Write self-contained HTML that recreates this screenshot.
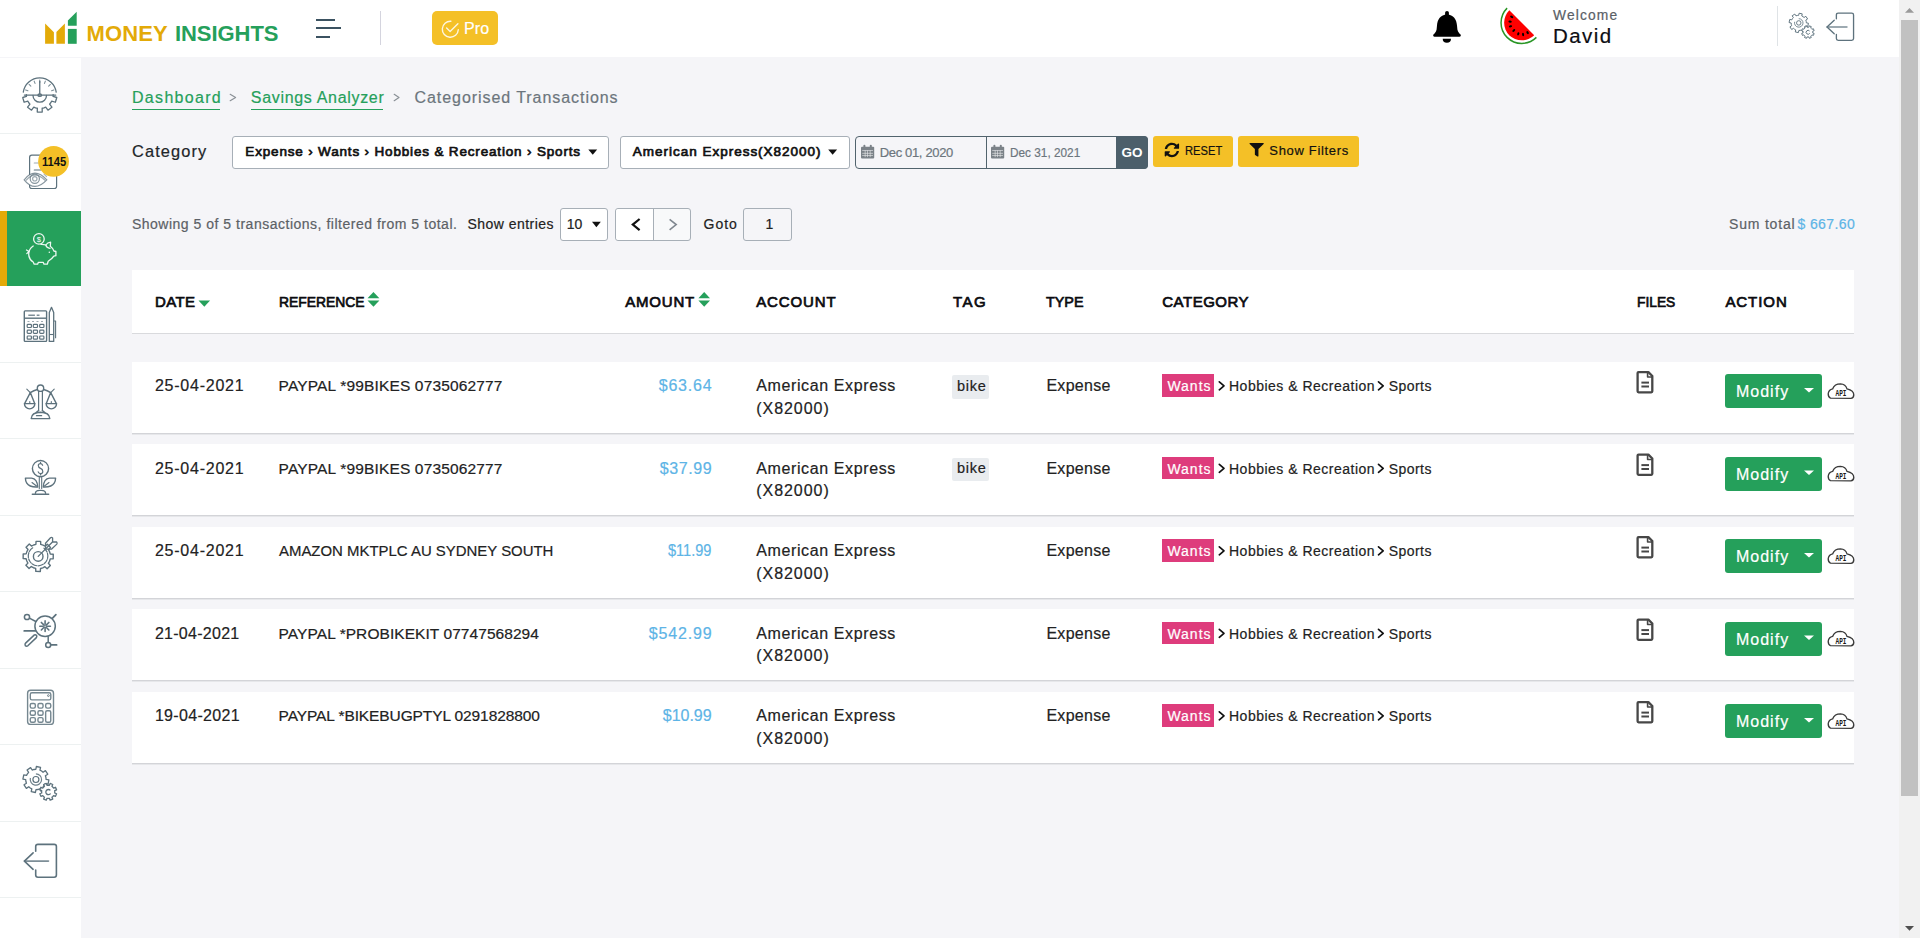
<!DOCTYPE html>
<html><head><meta charset="utf-8"><title>Money Insights - Categorised Transactions</title>
<style>
html,body{margin:0;padding:0;}
body{width:1920px;height:938px;overflow:hidden;background:#f5f5f8;font-family:"Liberation Sans",sans-serif;position:relative;}
.a{position:absolute;box-sizing:border-box;}
.t{position:absolute;white-space:nowrap;line-height:1.1172;font-family:"Liberation Sans",sans-serif;}
.r{-webkit-text-stroke:0.2px currentColor;}
.sb{-webkit-text-stroke:0.7px currentColor;}
#ov{position:absolute;left:0;top:0;width:1920px;height:938px;}
</style></head><body>
<div class="a" style="left:0.00px;top:0.00px;width:1899.00px;height:57.00px;background:#fff;"></div>
<div class="a" style="left:0.00px;top:58.00px;width:81.00px;height:880.00px;background:#fff;"></div>
<div class="a" style="left:0.00px;top:132.50px;width:81.00px;height:1.00px;background:#edf1f1;"></div>
<div class="a" style="left:0.00px;top:361.91px;width:81.00px;height:1.00px;background:#edf1f1;"></div>
<div class="a" style="left:0.00px;top:438.38px;width:81.00px;height:1.00px;background:#edf1f1;"></div>
<div class="a" style="left:0.00px;top:514.85px;width:81.00px;height:1.00px;background:#edf1f1;"></div>
<div class="a" style="left:0.00px;top:591.32px;width:81.00px;height:1.00px;background:#edf1f1;"></div>
<div class="a" style="left:0.00px;top:667.79px;width:81.00px;height:1.00px;background:#edf1f1;"></div>
<div class="a" style="left:0.00px;top:744.26px;width:81.00px;height:1.00px;background:#edf1f1;"></div>
<div class="a" style="left:0.00px;top:820.73px;width:81.00px;height:1.00px;background:#edf1f1;"></div>
<div class="a" style="left:0.00px;top:897.20px;width:81.00px;height:1.00px;background:#edf1f1;"></div>
<div class="a" style="left:0.00px;top:210.50px;width:81.00px;height:75.50px;background:#25a05b;"></div>
<div class="a" style="left:0.00px;top:210.50px;width:7.00px;height:75.50px;background:#e3aa08;"></div>
<div class="a" style="left:380.00px;top:11.00px;width:1.00px;height:34.00px;background:#d4d4de;"></div>
<div class="a" style="left:1777.00px;top:6.00px;width:1.00px;height:40.00px;background:#dfe3e6;"></div>
<div class="a" style="left:132.00px;top:108.60px;width:88.00px;height:1.40px;background:#25a05b;"></div>
<div class="a" style="left:250.80px;top:108.60px;width:131.80px;height:1.40px;background:#25a05b;"></div>
<div class="a" style="left:432.00px;top:11.00px;width:66.00px;height:34.00px;background:#f4c027;border-radius:5px;"></div>
<div class="a" style="left:1899.00px;top:0.00px;width:21.00px;height:938.00px;background:#f1f1f1;"></div>
<div class="a" style="left:1901.00px;top:20.00px;width:17.00px;height:776.00px;background:#c1c1c1;"></div>
<div class="a" style="left:232.00px;top:136.00px;width:377.00px;height:33.00px;background:#fff;border:1px solid #a7afb7;border-radius:3px;"></div>
<div class="a" style="left:620.00px;top:136.00px;width:230.00px;height:33.00px;background:#fff;border:1px solid #a7afb7;border-radius:3px;"></div>
<div class="a" style="left:855.00px;top:136.00px;width:293.00px;height:33.00px;background:#f5f5f8;border:1px solid #51636d;border-radius:4px;"></div>
<div class="a" style="left:986.00px;top:136.00px;width:1.00px;height:33.00px;background:#51636d;"></div>
<div class="a" style="left:1116.00px;top:136.00px;width:32.00px;height:33.00px;background:#4c5f6b;border-radius:0 4px 4px 0;"></div>
<div class="a" style="left:1153.00px;top:136.00px;width:80.00px;height:31.00px;background:#f4c027;border-radius:3px;"></div>
<div class="a" style="left:1238.00px;top:136.00px;width:121.00px;height:31.00px;background:#f4c027;border-radius:3px;"></div>
<div class="a" style="left:560.00px;top:208.00px;width:48.00px;height:33.00px;background:#fff;border:1px solid #a7afb7;border-radius:3px;"></div>
<div class="a" style="left:615.00px;top:208.00px;width:76.00px;height:33.00px;background:#f8f9fa;border:1px solid #a7afb7;border-radius:3px;"></div>
<div class="a" style="left:616.00px;top:209.00px;width:37.00px;height:31.00px;background:#fff;border-radius:3px 0 0 3px;"></div>
<div class="a" style="left:653.00px;top:208.00px;width:1.00px;height:33.00px;background:#a7afb7;"></div>
<div class="a" style="left:743.00px;top:208.00px;width:49.00px;height:33.00px;background:#f5f5f8;border:1px solid #a7afb7;border-radius:3px;"></div>
<div class="a" style="left:132.00px;top:270.00px;width:1722.00px;height:64.00px;background:#fff;border-bottom:1px solid #d9dadd;"></div>
<div class="a" style="left:132.00px;top:362.00px;width:1722.00px;height:72.00px;background:#fff;border-bottom:1px solid #d3d4d8;box-shadow:0 1px 0 #e6e7ea;"></div>
<div class="a" style="left:951.80px;top:375.30px;width:36.95px;height:23.45px;background:#e9ecef;border-radius:2px;"></div>
<div class="a" style="left:1161.90px;top:374.20px;width:51.90px;height:22.50px;background:#de3c7c;"></div>
<div class="a" style="left:1725.00px;top:374.00px;width:97.00px;height:34.00px;background:#25a05b;border-radius:3px;"></div>
<div class="a" style="left:132.00px;top:444.00px;width:1722.00px;height:72.00px;background:#fff;border-bottom:1px solid #d3d4d8;box-shadow:0 1px 0 #e6e7ea;"></div>
<div class="a" style="left:951.80px;top:457.80px;width:36.95px;height:23.45px;background:#e9ecef;border-radius:2px;"></div>
<div class="a" style="left:1161.90px;top:456.70px;width:51.90px;height:22.50px;background:#de3c7c;"></div>
<div class="a" style="left:1725.00px;top:456.50px;width:97.00px;height:34.00px;background:#25a05b;border-radius:3px;"></div>
<div class="a" style="left:132.00px;top:527.00px;width:1722.00px;height:72.00px;background:#fff;border-bottom:1px solid #d3d4d8;box-shadow:0 1px 0 #e6e7ea;"></div>
<div class="a" style="left:1161.90px;top:539.20px;width:51.90px;height:22.50px;background:#de3c7c;"></div>
<div class="a" style="left:1725.00px;top:539.00px;width:97.00px;height:34.00px;background:#25a05b;border-radius:3px;"></div>
<div class="a" style="left:132.00px;top:609.00px;width:1722.00px;height:72.00px;background:#fff;border-bottom:1px solid #d3d4d8;box-shadow:0 1px 0 #e6e7ea;"></div>
<div class="a" style="left:1161.90px;top:621.70px;width:51.90px;height:22.50px;background:#de3c7c;"></div>
<div class="a" style="left:1725.00px;top:621.50px;width:97.00px;height:34.00px;background:#25a05b;border-radius:3px;"></div>
<div class="a" style="left:132.00px;top:692.00px;width:1722.00px;height:72.00px;background:#fff;border-bottom:1px solid #d3d4d8;box-shadow:0 1px 0 #e6e7ea;"></div>
<div class="a" style="left:1161.90px;top:704.20px;width:51.90px;height:22.50px;background:#de3c7c;"></div>
<div class="a" style="left:1725.00px;top:704.00px;width:97.00px;height:34.00px;background:#25a05b;border-radius:3px;"></div>
<svg id="ov" width="1920" height="938" viewBox="0 0 1920 938">
<polygon fill="#e3aa08" points="45.1,23.4 53.9,32.3 53.9,43.8 45.1,43.8"/>
<polygon fill="#e3aa08" points="56.4,31.9 64.9,23.4 64.9,43.8 56.4,43.8"/>
<polygon fill="#25a05b" points="67.9,20.4 76.7,11.8 76.7,25.7 67.9,25.7"/>
<rect fill="#25a05b" x="67.9" y="28.9" width="8.8" height="14.9"/>
<g fill="#3b5261"><rect x="316" y="19" width="19" height="2"/><rect x="316" y="27" width="25" height="2"/><rect x="316" y="36" width="14" height="2"/></g>
<g fill="none" stroke="#fff" stroke-opacity="0.85" stroke-width="1.4" stroke-linecap="round" stroke-linejoin="round"><path d="M450.9,21.3 A8,8 0 1 0 458.3,29.8"/><path d="M446.6,28.1 L450.1,31.4 L457.9,23.7"/></g>
<g fill="#000"><rect x="1445.1" y="10.9" width="3.8" height="5.5" rx="1.9"/><path d="M1447,14.4 C1440.6,14.4 1437.3,19.5 1437,25.5 L1436.6,29.5 C1436.1,32 1434.6,33.4 1433.4,34.6 Q1432.6,36.7 1434.6,36.7 L1459.4,36.7 Q1461.4,36.7 1460.6,34.6 C1459.4,33.4 1457.9,32 1457.4,29.5 L1457,25.5 C1456.7,19.5 1453.4,14.4 1447,14.4 Z"/><path d="M1442.7,38.7 L1451,38.7 A4.15,4 0 0 1 1442.7,38.7 Z"/></g>
<path fill="none" stroke="#2a9626" stroke-width="1.5" d="M1507.11,8.11 A20.7,20.7 0 0 0 1536.39,37.39"/>
<path fill="#fe0000" d="M1509.30,10.30 A17.6,17.6 0 0 0 1534.20,35.20 Z"/>
<ellipse cx="1511.7" cy="16.9" rx="1.7" ry="1.05" fill="#000" transform="rotate(-149.8 1511.7 16.9)"/>
<ellipse cx="1510.1" cy="21.6" rx="1.7" ry="1.05" fill="#000" transform="rotate(-174.4 1510.1 21.6)"/>
<ellipse cx="1510.5" cy="26.3" rx="1.7" ry="1.05" fill="#000" transform="rotate(162.5 1510.5 26.3)"/>
<ellipse cx="1513.8" cy="30.5" rx="1.7" ry="1.05" fill="#000" transform="rotate(135.7 1513.8 30.5)"/>
<ellipse cx="1518.3" cy="33.8" rx="1.7" ry="1.05" fill="#000" transform="rotate(107.3 1518.3 33.8)"/>
<ellipse cx="1523.1" cy="34.5" rx="1.7" ry="1.05" fill="#000" transform="rotate(83.4 1523.1 34.5)"/>
<ellipse cx="1527.6" cy="32.6" rx="1.7" ry="1.05" fill="#000" transform="rotate(59.3 1527.6 32.6)"/>
<defs>
<g id="gears"><path d="M15.95,10.49 L17.80,10.30 L18.37,7.51 L22.55,8.36 L21.98,11.15 L23.60,12.04 L25.04,13.22 L27.42,11.64 L29.77,15.20 L27.39,16.77 L27.91,18.55 L28.10,20.40 L30.89,20.97 L30.04,25.15 L27.25,24.58 L26.36,26.20 L25.18,27.64 L26.76,30.02 L23.20,32.37 L21.63,29.99 L19.85,30.51 L18.00,30.70 L17.43,33.49 L13.25,32.64 L13.82,29.85 L12.20,28.96 L10.76,27.78 L8.38,29.36 L6.03,25.80 L8.41,24.23 L7.89,22.45 L7.70,20.60 L4.91,20.03 L5.76,15.85 L8.55,16.42 L9.44,14.80 L10.62,13.36 L9.04,10.98 L12.60,8.63 L14.17,11.01 Z" fill="#fff" stroke="#5d727d" stroke-width="1.3" stroke-linejoin="round"/><path d="M17.9,14.8 A5.7,5.7 0 1 1 12.4,19" fill="none" stroke="#5d727d" stroke-width="1.2" stroke-opacity="0.9"/><circle cx="17.9" cy="20.5" r="3" fill="none" stroke="#5d727d" stroke-width="1.2"/><path d="M30.20,26.20 L31.40,26.31 L32.14,24.42 L34.75,25.50 L33.94,27.36 L34.87,28.13 L35.64,29.06 L37.50,28.25 L38.58,30.86 L36.69,31.60 L36.80,32.80 L36.69,34.00 L38.58,34.74 L37.50,37.35 L35.64,36.54 L34.87,37.47 L33.94,38.24 L34.75,40.10 L32.14,41.18 L31.40,39.29 L30.20,39.40 L29.00,39.29 L28.26,41.18 L25.65,40.10 L26.46,38.24 L25.53,37.47 L24.76,36.54 L22.90,37.35 L21.82,34.74 L23.71,34.00 L23.60,32.80 L23.71,31.60 L21.82,30.86 L22.90,28.25 L24.76,29.06 L25.53,28.13 L26.46,27.36 L25.65,25.50 L28.26,24.42 L29.00,26.31 Z" fill="#fff" stroke="#5d727d" stroke-width="1.3" stroke-linejoin="round"/><path d="M32.4,31.4 A2.6,2.6 0 1 0 32.6,34.5" fill="none" stroke="#5d727d" stroke-width="1.3"/></g>
<g id="logout" fill="none" stroke="#5d727d" stroke-width="1.6" stroke-linecap="round" stroke-linejoin="round"><path d="M17.7,15.2 L17.7,10.6 Q17.7,8.4 19.9,8.4 L36.2,8.4 Q38.4,8.4 38.4,10.6 L38.4,39 Q38.4,41.2 36.2,41.2 L19.9,41.2 Q17.7,41.2 17.7,39 L17.7,34"/><path d="M6.4,25.1 L30.5,25.1" stroke-opacity="0.8"/><path d="M15.1,16.9 L6.4,25.1 L15.1,33.3"/></g>
</defs>
<use href="#gears" transform="translate(1785.42,7.64) scale(0.745)"/>
<use href="#logout" transform="translate(1821.69,6.13) scale(0.83)"/>
<g fill="none" stroke="#5d727d" stroke-width="1.3" stroke-linecap="round">
<path d="M23.3,92.2 A16.6,16.6 0 0 1 56.2,92.2"/>
<line x1="27.91" y1="90.76" x2="25.65" y2="89.94" stroke-width="1.1" stroke-opacity="0.8"/>
<line x1="30.84" y1="86.16" x2="29.14" y2="84.46" stroke-width="1.1" stroke-opacity="0.8"/>
<line x1="35.03" y1="83.39" x2="34.13" y2="81.16" stroke-width="1.1" stroke-opacity="0.8"/>
<line x1="39.75" y1="82.47" x2="39.75" y2="80.07" stroke-width="1.1" stroke-opacity="0.8"/>
<line x1="44.47" y1="83.39" x2="45.37" y2="81.16" stroke-width="1.1" stroke-opacity="0.8"/>
<line x1="48.66" y1="86.16" x2="50.36" y2="84.46" stroke-width="1.1" stroke-opacity="0.8"/>
<line x1="51.59" y1="90.76" x2="53.85" y2="89.94" stroke-width="1.1" stroke-opacity="0.8"/>
<line x1="39.75" y1="81.5" x2="39.75" y2="94"/>
<ellipse cx="39.75" cy="95.2" rx="1.8" ry="1.2" fill="#fff"/>
<path d="M33,95.4 A6.75,6.75 0 0 0 46.5,95.4"/>
<path d="M24.4,95.07 L55.7,95.07"/>
<path d="M53.14,94.60 L53.07,96.49 L56.78,97.50 L55.38,102.25 L51.72,101.09 L50.75,102.72 L49.57,104.19 L51.93,107.22 L47.96,110.18 L45.73,107.06 L43.98,107.78 L42.15,108.25 L42.23,112.09 L37.27,112.09 L37.35,108.25 L35.52,107.78 L33.77,107.06 L31.54,110.18 L27.57,107.22 L29.93,104.19 L28.75,102.72 L27.78,101.09 L24.12,102.25 L22.72,97.50 L26.43,96.49 L26.36,94.60" stroke-linejoin="round"/>
</g>
<g fill="none" stroke="#5d727d" stroke-width="1.2" stroke-linecap="round"><rect x="29.6" y="155.2" width="27" height="33.3" rx="2.2" fill="#fff"/><line x1="34.3" y1="163" x2="44" y2="163" stroke-opacity="0.6"/><line x1="34.3" y1="170" x2="40.7" y2="170"/><path d="M24.2,179.8 Q34.5,166.5 46.8,179.8 Q34.5,193 24.2,179.8 Z" fill="#fff" stroke-opacity="0.75"/><path d="M26.3,180.2 Q34.5,170.2 45,180.2" stroke-opacity="0.6"/><circle cx="34.8" cy="178.8" r="4.6" stroke-opacity="0.75"/><circle cx="34.8" cy="178.8" r="2.2" stroke-opacity="0.6"/><line x1="44" y1="174" x2="46.5" y2="176.5" stroke-opacity="0.5"/></g>
<circle cx="53.55" cy="161.45" r="15.4" fill="#f4c027"/>
<g fill="none" stroke="#fff" stroke-width="1.3" stroke-linecap="round" stroke-linejoin="round" stroke-opacity="0.92"><circle cx="38.9" cy="238.9" r="5.3"/><path d="M33.2,246 C29.6,248.5 28.3,252.5 28.9,256 C29.5,259 31.3,261 33.2,262 L34.2,264.2 L37.6,264.2 L38.4,262.3 L43.2,262.3 L44,264.2 L47.3,264.2 L48.2,261.3 C50.5,259.8 52.7,258 53.8,256.2 L55.9,255.7 L55.9,251.5 L53.9,251 C53.2,249 51.8,247.3 50.3,246.2 L50.6,242.2 C48.6,242.4 46.8,243.5 45.8,245 C44.2,244.5 42.5,244.3 41,244.4"/><path d="M29,251.5 L26.5,250 M29,251.5 L26.8,253.6"/><path d="M45.9,245.2 C46.3,247.3 47.8,248.2 49.9,248.4"/></g><text x="38.9" y="241.7" font-family="Liberation Sans" font-size="7.5" fill="#fff" text-anchor="middle">$</text><circle cx="49.3" cy="252.2" r="0.7" fill="#fff"/>
<g transform="translate(18,300)" fill="none" stroke="#5d727d" stroke-width="1.4" stroke-linejoin="round"><rect x="6.3" y="10.9" width="22.3" height="30.5" rx="0.8"/><line x1="6.3" y1="18.2" x2="28.6" y2="18.2"/><line x1="10.3" y1="15.2" x2="16.9" y2="15.2" stroke-width="1.2"/><line x1="18.7" y1="15.2" x2="21.5" y2="15.2" stroke-width="1.2"/><g stroke-width="1.0" stroke-opacity="0.6"><line x1="9.5" y1="21.5" x2="11.5" y2="21.5"/><line x1="14" y1="21.5" x2="16" y2="21.5"/><line x1="18.5" y1="21.5" x2="20.5" y2="21.5"/><line x1="23" y1="21.5" x2="25" y2="21.5"/></g><g stroke-width="1.2"><rect x="9.20" y="24.30" width="4.2" height="3.2" rx="0.8"/><rect x="15.30" y="24.30" width="4.2" height="3.2" rx="0.8"/><rect x="21.70" y="24.30" width="4.2" height="3.2" rx="0.8"/><rect x="9.20" y="30.10" width="4.2" height="3.2" rx="0.8"/><rect x="15.30" y="30.10" width="4.2" height="3.2" rx="0.8"/><rect x="21.70" y="30.10" width="4.2" height="3.2" rx="0.8"/><rect x="9.20" y="36.00" width="4.2" height="3.2" rx="0.8"/><rect x="15.30" y="36.00" width="4.2" height="3.2" rx="0.8"/><rect x="21.70" y="36.00" width="4.2" height="3.2" rx="0.8"/></g><path d="M31.3,12.5 L33.5,7.3 L35.7,12.5 L35.7,41.4 L31.3,41.4 Z" stroke-width="1.3"/><line x1="31.3" y1="34.5" x2="35.7" y2="34.5" stroke-width="1.1"/><path d="M35.7,21 L37.6,21 L37.6,38.3" stroke-width="1.1"/></g>
<g transform="translate(18,378)" fill="none" stroke="#5d727d" stroke-width="1.4" stroke-linecap="round" stroke-linejoin="round"><circle cx="22.5" cy="10.2" r="3.2"/><path d="M20.6,13.3 L20.6,32.5 M24.4,13.3 L24.4,32.5" stroke-width="1.2"/><path d="M12.3,14.6 Q15.8,12.4 19.4,11.5 M25.6,11.5 Q29.2,12.4 32.7,14.6"/><path d="M8.8,11.2 L12.3,14.6 M32.7,14.6 L36.2,11.2" stroke-width="1.1"/><path d="M12.3,14.6 L6.6,25.6 M12.3,14.6 L16.7,25.6 M32.7,14.6 L28.3,25.6 M32.7,14.6 L38.4,25.6"/><path d="M6.4,25.6 A5.2,5.2 0 0 0 16.9,25.6 Z M28.1,25.6 A5.2,5.2 0 0 0 38.6,25.6 Z"/><path d="M11.8,25.2 L11.8,23.6 M33.3,25.2 L33.3,23.6" stroke-width="1.1"/><path d="M20.6,32.5 L18.2,34.6 M24.4,32.5 L26.8,34.6"/><path d="M13.2,40.6 Q13.6,34.4 22.5,34.3 Q31.4,34.4 31.8,40.6 Z"/><line x1="18.5" y1="37.7" x2="23.6" y2="37.7" stroke-width="1.3"/></g>
<g transform="translate(18,453)" fill="none" stroke="#5d727d" stroke-width="1.4" stroke-linecap="round" stroke-linejoin="round"><circle cx="22.5" cy="15.6" r="8.1"/><path d="M24.6,12.3 Q24,10.6 22.5,10.6 Q20.3,10.6 20.3,12.6 Q20.3,14.6 22.5,15.4 Q24.8,16.2 24.8,18.4 Q24.8,20.6 22.5,20.6 Q20.7,20.6 20.2,18.9 M22.5,9.3 L22.5,10.6 M22.5,20.6 L22.5,21.9" stroke-width="1.2"/><path d="M21.3,23.8 L21.3,35.4 M23.7,23.8 L23.7,35.4" stroke-width="1.1"/><path d="M7.4,25.1 L13.5,25.1 Q19.3,25.6 19.7,34 Q11.3,34.4 8.8,30.2 Q7.4,28 7.4,25.1 Z"/><path d="M37.6,25.1 L31.5,25.1 Q25.7,25.6 25.3,34 Q33.7,34.4 36.2,30.2 Q37.6,28 37.6,25.1 Z"/><path d="M14,29.5 L18.5,33 M31,29.5 L26.5,33" stroke-width="1.1"/><path d="M17.4,40.2 Q17.6,37.6 21.5,37.4 L23.5,37.4 Q27.4,37.6 27.6,40.2"/><line x1="14.3" y1="41.2" x2="30.7" y2="41.2"/></g>
<g transform="translate(18,530)" fill="none" stroke="#5d727d" stroke-width="1.4" stroke-linecap="round" stroke-linejoin="round"><path d="M15.59,15.00 L17.89,14.32 L18.07,11.35 L22.59,11.39 L22.72,14.36 L25.01,15.08 L27.11,16.22 L29.34,14.25 L32.50,17.48 L30.50,19.67 L31.60,21.79 L32.28,24.09 L35.25,24.27 L35.21,28.79 L32.24,28.92 L31.52,31.21 L30.38,33.31 L32.35,35.54 L29.12,38.70 L26.93,36.70 L24.81,37.80 L22.51,38.48 L22.33,41.45 L17.81,41.41 L17.68,38.44 L15.39,37.72 L13.29,36.58 L11.06,38.55 L7.90,35.32 L9.90,33.13 L8.80,31.01 L8.12,28.71 L5.15,28.53 L5.19,24.01 L8.16,23.88 L8.88,21.59 L10.02,19.49 L8.05,17.26 L11.28,14.10 L13.47,16.10 Z"/><path d="M26,18.2 A9.8,9.8 0 1 1 15.5,17.3" stroke-width="1.2" stroke-dasharray="5 1.3"/><circle cx="20.2" cy="26.4" r="4.8"/><path d="M20.2,26.4 L34.2,12.2" stroke-width="1.3"/><path d="M27.5,13.2 L32.5,7.8 Q33.6,7 34.6,8 L34.6,12 L38.6,12 Q39.6,13 38.8,14.1 L33.4,19.2 L27.6,19.2 Z" stroke-width="1.3"/></g><rect x="36" y="548" width="10" height="1" fill="#fff" opacity="0"/>
<g transform="translate(18,607)" fill="none" stroke="#5d727d" stroke-width="1.5" stroke-linecap="round" stroke-linejoin="round"><circle cx="27.1" cy="19.2" r="10.2"/><line x1="29.30" y1="19.20" x2="32.40" y2="19.20" stroke-width="1.6"/><line x1="28.66" y1="20.76" x2="30.85" y2="22.95" stroke-width="1.6"/><line x1="27.10" y1="21.40" x2="27.10" y2="24.50" stroke-width="1.6"/><line x1="25.54" y1="20.76" x2="23.35" y2="22.95" stroke-width="1.6"/><line x1="24.90" y1="19.20" x2="21.80" y2="19.20" stroke-width="1.6"/><line x1="25.54" y1="17.64" x2="23.35" y2="15.45" stroke-width="1.6"/><line x1="27.10" y1="17.00" x2="27.10" y2="13.90" stroke-width="1.6"/><line x1="28.66" y1="17.64" x2="30.85" y2="15.45" stroke-width="1.6"/><circle cx="27.1" cy="19.2" r="1.3" stroke-width="1.2"/><circle cx="9" cy="10" r="2.6"/><line x1="11.4" y1="11.2" x2="17.8" y2="14.5"/><line x1="34.3" y1="11.4" x2="37.9" y2="7.6" stroke-width="1.7"/><line x1="6.2" y1="23.9" x2="17.6" y2="23.9" stroke-width="1.7"/><path d="M7.6,36.1 L16.4,27.9 Q17.7,27.5 18.6,28.5 Q19.1,29.7 18.4,30.6 L9.8,38.8 Q8.4,39.6 7.3,38.6 Q6.6,37.2 7.6,36.1 Z" stroke-width="1.5"/><line x1="30.2" y1="29.4" x2="30.2" y2="35.4"/><circle cx="30.2" cy="37.9" r="2.5"/><line x1="32.7" y1="37.9" x2="38.6" y2="37.9" stroke-width="1.8"/></g>
<g transform="translate(18,683)" fill="none" stroke="#5d727d" stroke-width="1.4" stroke-linejoin="round" stroke-opacity="0.85"><rect x="9.6" y="7.3" width="25.9" height="34.1" rx="3"/><rect x="12.3" y="9.8" width="20.5" height="7.1" rx="1.6"/><circle cx="30.4" cy="12.6" r="0.9" stroke-width="1"/><rect x="12.25" y="20.50" width="5.1" height="4.6" rx="1.5"/><rect x="19.95" y="20.50" width="5.1" height="4.6" rx="1.5"/><rect x="27.65" y="20.50" width="5.1" height="4.6" rx="1.5"/><rect x="12.25" y="27.70" width="5.1" height="4.6" rx="1.5"/><rect x="19.95" y="27.70" width="5.1" height="4.6" rx="1.5"/><rect x="12.25" y="34.60" width="5.1" height="4.6" rx="1.5"/><rect x="19.95" y="34.60" width="5.1" height="4.6" rx="1.5"/><rect x="27.65" y="27.7" width="5.1" height="11.5" rx="1.5"/></g>
<use href="#gears" transform="translate(18,759)"/>
<use href="#logout" transform="translate(18,836)"/>
<polygon fill="#111" points="588.3,149.6 597.2,149.6 592.75,154.7"/>
<polygon fill="#111" points="828.2,149.6 837.1,149.6 832.65,154.7"/>
<polygon fill="#111" points="592,221.8 600.8,221.8 596.4,227.2"/>
<g fill="none" stroke="#8a9096" stroke-width="1.2" stroke-linecap="round" stroke-linejoin="round"><path d="M230.2,94.3 L235.6,97.5 L230.2,100.7"/><path d="M394.2,94.3 L399,97.5 L394.2,100.7"/></g>
<g transform="translate(861,144.8)" fill="#7b8288"><rect x="0" y="2" width="13.2" height="11.6" rx="1"/><rect x="2.4" y="0" width="2" height="3.4" rx="1"/><rect x="8.8" y="0" width="2" height="3.4" rx="1"/><g fill="#e9eaec"><rect x="1.2" y="5.5" width="10.8" height="0.6"/><rect x="1.2" y="8.1" width="10.8" height="0.6"/><rect x="1.2" y="10.6" width="10.8" height="0.6"/><rect x="3.8" y="5.5" width="0.6" height="6.8"/><rect x="6.3" y="5.5" width="0.6" height="6.8"/><rect x="8.8" y="5.5" width="0.6" height="6.8"/></g></g>
<g transform="translate(991,144.8)" fill="#7b8288"><rect x="0" y="2" width="13.2" height="11.6" rx="1"/><rect x="2.4" y="0" width="2" height="3.4" rx="1"/><rect x="8.8" y="0" width="2" height="3.4" rx="1"/><g fill="#e9eaec"><rect x="1.2" y="5.5" width="10.8" height="0.6"/><rect x="1.2" y="8.1" width="10.8" height="0.6"/><rect x="1.2" y="10.6" width="10.8" height="0.6"/><rect x="3.8" y="5.5" width="0.6" height="6.8"/><rect x="6.3" y="5.5" width="0.6" height="6.8"/><rect x="8.8" y="5.5" width="0.6" height="6.8"/></g></g>
<path fill="#111" transform="translate(1164.468,142.568) scale(0.02903)" d="M370.72 133.28C339.458 104.008 298.888 87.962 255.848 88c-77.458.068-144.328 53.178-162.791 126.85-1.344 5.363-6.122 9.150-11.651 9.150H24.103c-7.498 0-13.194-6.807-11.807-14.176C33.933 94.924 134.813 8 256 8c66.448 0 126.791 26.136 171.315 68.685L463.03 40.970C478.149 25.851 504 36.559 504 57.941V192c0 13.255-10.745 24-24 24H345.941c-21.382 0-32.090-25.851-16.971-40.971l41.750-41.749zM32 296h134.059c21.382 0 32.090 25.851 16.971 40.971l-41.750 41.750c31.262 29.273 71.835 45.319 114.876 45.280 77.418-.070 144.315-53.144 162.787-126.849 1.344-5.363 6.122-9.150 11.651-9.150h57.304c7.498 0 13.194 6.807 11.807 14.176C478.067 417.076 377.187 504 256 504c-66.448 0-126.791-26.136-171.315-68.685L48.970 471.030C33.851 486.149 8 475.441 8 454.059V320c0-13.255 10.745-24 24-24z"/>
<path fill="#111" transform="translate(1249.5,143) scale(0.02793,0.02656)" d="M487.976 0H24.028C2.710 0-8.047 25.866 7.058 40.971L192 225.941V432c0 7.831 3.821 15.170 10.237 19.662l80 55.980C298.020 518.690 320 507.493 320 487.980V225.941l184.947-184.970C520.021 25.896 509.338 0 487.976 0z"/>
<path d="M639.6,219 L632.8,224.6 L639.6,230.2" fill="none" stroke="#111" stroke-width="2.2" stroke-linejoin="miter"/>
<path d="M669.6,219.3 L676.2,224.6 L669.6,229.9" fill="none" stroke="#808890" stroke-width="1.6"/>
<g fill="#25a05b"><polygon points="198.5,300.6 210.1,300.6 204.3,306.8"/><polygon points="367.5,298.3 379.4,298.3 373.45,291.9"/><polygon points="367.5,300.6 379.4,300.6 373.45,306.8"/><polygon points="698.4,298.3 710,298.3 704.2,291.9"/><polygon points="698.4,300.6 710,300.6 704.2,306.8"/></g>
<g transform="translate(0,0.0)"><g fill="none" stroke="#111" stroke-width="1.7" stroke-linecap="round" stroke-linejoin="round"><path d="M1219.3,381.8 L1224,385.8 L1219.3,389.8"/><path d="M1378.5,381.8 L1383.2,385.8 L1378.5,389.8"/></g><g fill="none" stroke="#474747" stroke-width="2.3" stroke-linejoin="round"><path d="M1637.6,373.1 Q1637.6,372.1 1638.6,372.1 L1648.4,372.1 L1652.3,376 L1652.3,391.3 Q1652.3,392.3 1651.3,392.3 L1638.6,392.3 Q1637.6,392.3 1637.6,391.3 Z"/><path d="M1647.6,372.5 L1647.6,377 L1652,377" stroke-width="1.6"/><line x1="1641.4" y1="382.6" x2="1649" y2="382.6" stroke-width="2"/><line x1="1641.4" y1="386.5" x2="1649" y2="386.5" stroke-width="2"/></g><polygon fill="#fff" points="1804,388 1814,388 1809,392.4"/><path d="M1830.5,398.2 Q1828.2,397.2 1828.2,393.8 Q1828.6,389.6 1832.7,388.8 Q1834.6,383.9 1840.5,383.9 Q1845.6,384.1 1847,388.9 Q1853.8,390.6 1853.8,394.9 Q1853.6,398.2 1850.8,398.4 Z" fill="none" stroke="#3a3a3a" stroke-width="1.35"/><text x="1841" y="396.2" font-family="Liberation Mono" font-size="8.4" font-weight="700" fill="#1a1a1a" text-anchor="middle" textLength="11" lengthAdjust="spacingAndGlyphs">API</text></g>
<g transform="translate(0,82.5)"><g fill="none" stroke="#111" stroke-width="1.7" stroke-linecap="round" stroke-linejoin="round"><path d="M1219.3,381.8 L1224,385.8 L1219.3,389.8"/><path d="M1378.5,381.8 L1383.2,385.8 L1378.5,389.8"/></g><g fill="none" stroke="#474747" stroke-width="2.3" stroke-linejoin="round"><path d="M1637.6,373.1 Q1637.6,372.1 1638.6,372.1 L1648.4,372.1 L1652.3,376 L1652.3,391.3 Q1652.3,392.3 1651.3,392.3 L1638.6,392.3 Q1637.6,392.3 1637.6,391.3 Z"/><path d="M1647.6,372.5 L1647.6,377 L1652,377" stroke-width="1.6"/><line x1="1641.4" y1="382.6" x2="1649" y2="382.6" stroke-width="2"/><line x1="1641.4" y1="386.5" x2="1649" y2="386.5" stroke-width="2"/></g><polygon fill="#fff" points="1804,388 1814,388 1809,392.4"/><path d="M1830.5,398.2 Q1828.2,397.2 1828.2,393.8 Q1828.6,389.6 1832.7,388.8 Q1834.6,383.9 1840.5,383.9 Q1845.6,384.1 1847,388.9 Q1853.8,390.6 1853.8,394.9 Q1853.6,398.2 1850.8,398.4 Z" fill="none" stroke="#3a3a3a" stroke-width="1.35"/><text x="1841" y="396.2" font-family="Liberation Mono" font-size="8.4" font-weight="700" fill="#1a1a1a" text-anchor="middle" textLength="11" lengthAdjust="spacingAndGlyphs">API</text></g>
<g transform="translate(0,165.0)"><g fill="none" stroke="#111" stroke-width="1.7" stroke-linecap="round" stroke-linejoin="round"><path d="M1219.3,381.8 L1224,385.8 L1219.3,389.8"/><path d="M1378.5,381.8 L1383.2,385.8 L1378.5,389.8"/></g><g fill="none" stroke="#474747" stroke-width="2.3" stroke-linejoin="round"><path d="M1637.6,373.1 Q1637.6,372.1 1638.6,372.1 L1648.4,372.1 L1652.3,376 L1652.3,391.3 Q1652.3,392.3 1651.3,392.3 L1638.6,392.3 Q1637.6,392.3 1637.6,391.3 Z"/><path d="M1647.6,372.5 L1647.6,377 L1652,377" stroke-width="1.6"/><line x1="1641.4" y1="382.6" x2="1649" y2="382.6" stroke-width="2"/><line x1="1641.4" y1="386.5" x2="1649" y2="386.5" stroke-width="2"/></g><polygon fill="#fff" points="1804,388 1814,388 1809,392.4"/><path d="M1830.5,398.2 Q1828.2,397.2 1828.2,393.8 Q1828.6,389.6 1832.7,388.8 Q1834.6,383.9 1840.5,383.9 Q1845.6,384.1 1847,388.9 Q1853.8,390.6 1853.8,394.9 Q1853.6,398.2 1850.8,398.4 Z" fill="none" stroke="#3a3a3a" stroke-width="1.35"/><text x="1841" y="396.2" font-family="Liberation Mono" font-size="8.4" font-weight="700" fill="#1a1a1a" text-anchor="middle" textLength="11" lengthAdjust="spacingAndGlyphs">API</text></g>
<g transform="translate(0,247.5)"><g fill="none" stroke="#111" stroke-width="1.7" stroke-linecap="round" stroke-linejoin="round"><path d="M1219.3,381.8 L1224,385.8 L1219.3,389.8"/><path d="M1378.5,381.8 L1383.2,385.8 L1378.5,389.8"/></g><g fill="none" stroke="#474747" stroke-width="2.3" stroke-linejoin="round"><path d="M1637.6,373.1 Q1637.6,372.1 1638.6,372.1 L1648.4,372.1 L1652.3,376 L1652.3,391.3 Q1652.3,392.3 1651.3,392.3 L1638.6,392.3 Q1637.6,392.3 1637.6,391.3 Z"/><path d="M1647.6,372.5 L1647.6,377 L1652,377" stroke-width="1.6"/><line x1="1641.4" y1="382.6" x2="1649" y2="382.6" stroke-width="2"/><line x1="1641.4" y1="386.5" x2="1649" y2="386.5" stroke-width="2"/></g><polygon fill="#fff" points="1804,388 1814,388 1809,392.4"/><path d="M1830.5,398.2 Q1828.2,397.2 1828.2,393.8 Q1828.6,389.6 1832.7,388.8 Q1834.6,383.9 1840.5,383.9 Q1845.6,384.1 1847,388.9 Q1853.8,390.6 1853.8,394.9 Q1853.6,398.2 1850.8,398.4 Z" fill="none" stroke="#3a3a3a" stroke-width="1.35"/><text x="1841" y="396.2" font-family="Liberation Mono" font-size="8.4" font-weight="700" fill="#1a1a1a" text-anchor="middle" textLength="11" lengthAdjust="spacingAndGlyphs">API</text></g>
<g transform="translate(0,330.0)"><g fill="none" stroke="#111" stroke-width="1.7" stroke-linecap="round" stroke-linejoin="round"><path d="M1219.3,381.8 L1224,385.8 L1219.3,389.8"/><path d="M1378.5,381.8 L1383.2,385.8 L1378.5,389.8"/></g><g fill="none" stroke="#474747" stroke-width="2.3" stroke-linejoin="round"><path d="M1637.6,373.1 Q1637.6,372.1 1638.6,372.1 L1648.4,372.1 L1652.3,376 L1652.3,391.3 Q1652.3,392.3 1651.3,392.3 L1638.6,392.3 Q1637.6,392.3 1637.6,391.3 Z"/><path d="M1647.6,372.5 L1647.6,377 L1652,377" stroke-width="1.6"/><line x1="1641.4" y1="382.6" x2="1649" y2="382.6" stroke-width="2"/><line x1="1641.4" y1="386.5" x2="1649" y2="386.5" stroke-width="2"/></g><polygon fill="#fff" points="1804,388 1814,388 1809,392.4"/><path d="M1830.5,398.2 Q1828.2,397.2 1828.2,393.8 Q1828.6,389.6 1832.7,388.8 Q1834.6,383.9 1840.5,383.9 Q1845.6,384.1 1847,388.9 Q1853.8,390.6 1853.8,394.9 Q1853.6,398.2 1850.8,398.4 Z" fill="none" stroke="#3a3a3a" stroke-width="1.35"/><text x="1841" y="396.2" font-family="Liberation Mono" font-size="8.4" font-weight="700" fill="#1a1a1a" text-anchor="middle" textLength="11" lengthAdjust="spacingAndGlyphs">API</text></g>
<g fill="#9a9a9a"><polygon points="1905,12.8 1914,12.8 1909.5,7.9"/></g><polygon fill="#505050" points="1905,926 1914,926 1909.5,930.8"/>
</svg>
<div class="t" id="t0" style="left:86.60px;top:22.00px;font-size:22px;font-weight:700;color:#e3aa08;letter-spacing:0.118px;">MONEY</div>
<div class="t" id="t1" style="left:174.90px;top:22.00px;font-size:22px;font-weight:700;color:#25a05b;letter-spacing:-0.049px;">INSIGHTS</div>
<div class="t r" id="t2" style="left:464.10px;top:20.00px;font-size:16px;font-weight:400;color:#ffffff;letter-spacing:0.037px;">Pro</div>
<div class="t r" id="t3" style="left:1553.00px;top:8.01px;font-size:13.8px;font-weight:400;color:#5a6066;letter-spacing:1.142px;">Welcome</div>
<div class="t r" id="t4" style="left:1553.00px;top:25.01px;font-size:20.5px;font-weight:400;color:#0d0d12;letter-spacing:1.455px;">David</div>
<div class="t" id="t5" style="left:41.70px;top:156.01px;font-size:12px;font-weight:700;color:#111;letter-spacing:0.000px;transform:scaleX(0.9288);transform-origin:0 0;">1145</div>
<div class="t r" id="t6" style="left:132.00px;top:89.01px;font-size:16px;font-weight:400;color:#25a05b;letter-spacing:1.312px;">Dashboard</div>
<div class="t r" id="t7" style="left:250.80px;top:89.01px;font-size:16px;font-weight:400;color:#25a05b;letter-spacing:0.683px;">Savings Analyzer</div>
<div class="t r" id="t8" style="left:414.50px;top:89.00px;font-size:16px;font-weight:400;color:#6c757d;letter-spacing:0.941px;">Categorised Transactions</div>
<div class="t r" id="t9" style="left:132.00px;top:142.01px;font-size:16.4px;font-weight:400;color:#212529;letter-spacing:1.114px;">Category</div>
<div class="t sb" id="t10" style="left:245.30px;top:144.00px;font-size:13.5px;font-weight:400;color:#111;letter-spacing:0.829px;">Expense › Wants › Hobbies &amp; Recreation › Sports</div>
<div class="t sb" id="t11" style="left:632.80px;top:144.00px;font-size:13.5px;font-weight:400;color:#111;letter-spacing:0.987px;">American Express(X82000)</div>
<div class="t r" id="t12" style="left:879.70px;top:146.00px;font-size:13px;font-weight:400;color:#6c757d;letter-spacing:-0.337px;">Dec 01, 2020</div>
<div class="t r" id="t13" style="left:1009.70px;top:146.00px;font-size:13px;font-weight:400;color:#6c757d;letter-spacing:0.000px;transform:scaleX(0.9082);transform-origin:0 0;">Dec 31, 2021</div>
<div class="t" id="t14" style="left:1121.50px;top:145.01px;font-size:13.5px;font-weight:700;color:#fff;letter-spacing:0.000px;">GO</div>
<div class="t r" id="t15" style="left:1184.50px;top:144.01px;font-size:12.6px;font-weight:400;color:#111;letter-spacing:0.000px;transform:scaleX(0.8880);transform-origin:0 0;">RESET</div>
<div class="t r" id="t16" style="left:1269.30px;top:144.01px;font-size:13px;font-weight:400;color:#111;letter-spacing:0.674px;">Show Filters</div>
<div class="t r" id="t17" style="left:131.90px;top:217.01px;font-size:14px;font-weight:400;color:#5c6166;letter-spacing:0.508px;">Showing 5 of 5 transactions, filtered from 5 total.</div>
<div class="t r" id="t18" style="left:467.40px;top:217.01px;font-size:14px;font-weight:400;color:#222;letter-spacing:0.471px;">Show entries</div>
<div class="t r" id="t19" style="left:566.80px;top:217.01px;font-size:14px;font-weight:400;color:#222;letter-spacing:0.000px;">10</div>
<div class="t r" id="t20" style="left:703.50px;top:217.01px;font-size:14px;font-weight:400;color:#222;letter-spacing:0.987px;">Goto</div>
<div class="t r" id="t21" style="left:765.50px;top:217.01px;font-size:14px;font-weight:400;color:#222;letter-spacing:0.000px;">1</div>
<div class="t r" id="t22" style="left:1729.00px;top:217.00px;font-size:14px;font-weight:400;color:#5c6166;letter-spacing:0.810px;">Sum total</div>
<div class="t r" id="t23" style="left:1797.40px;top:217.00px;font-size:14px;font-weight:400;color:#5db4e6;letter-spacing:0.417px;">$ 667.60</div>
<div class="t sb" id="t24" style="left:154.90px;top:294.01px;font-size:15px;font-weight:400;color:#0b0b0f;letter-spacing:0.431px;">DATE</div>
<div class="t sb" id="t25" style="left:278.80px;top:294.01px;font-size:15px;font-weight:400;color:#0b0b0f;letter-spacing:0.000px;transform:scaleX(0.9243);transform-origin:0 0;">REFERENCE</div>
<div class="t sb" id="t26" style="left:625.30px;top:294.01px;font-size:15px;font-weight:400;color:#0b0b0f;letter-spacing:0.780px;">AMOUNT</div>
<div class="t sb" id="t27" style="left:756.25px;top:294.01px;font-size:15px;font-weight:400;color:#0b0b0f;letter-spacing:0.863px;">ACCOUNT</div>
<div class="t sb" id="t28" style="left:952.90px;top:294.01px;font-size:15px;font-weight:400;color:#0b0b0f;letter-spacing:1.583px;">TAG</div>
<div class="t sb" id="t29" style="left:1046.00px;top:294.01px;font-size:15px;font-weight:400;color:#0b0b0f;letter-spacing:0.000px;transform:scaleX(0.9556);transform-origin:0 0;">TYPE</div>
<div class="t sb" id="t30" style="left:1162.30px;top:294.01px;font-size:15px;font-weight:400;color:#0b0b0f;letter-spacing:0.486px;">CATEGORY</div>
<div class="t sb" id="t31" style="left:1636.70px;top:294.01px;font-size:15px;font-weight:400;color:#0b0b0f;letter-spacing:0.000px;transform:scaleX(0.9188);transform-origin:0 0;">FILES</div>
<div class="t sb" id="t32" style="left:1725.40px;top:294.01px;font-size:15px;font-weight:400;color:#0b0b0f;letter-spacing:0.946px;">ACTION</div>
<div class="t r" id="t33" style="left:154.90px;top:377.00px;font-size:16px;font-weight:400;color:#222;letter-spacing:0.771px;">25-04-2021</div>
<div class="t r" id="t34" style="left:278.60px;top:377.00px;font-size:15.5px;font-weight:400;color:#222;letter-spacing:0.152px;">PAYPAL *99BIKES 0735062777</div>
<div class="t r" id="t35" style="left:658.75px;top:377.00px;font-size:16px;font-weight:400;color:#5db4e6;letter-spacing:0.778px;">$63.64</div>
<div class="t r" id="t36" style="left:756.25px;top:377.00px;font-size:16px;font-weight:400;color:#222;letter-spacing:0.613px;">American Express</div>
<div class="t r" id="t37" style="left:756.25px;top:400.00px;font-size:16px;font-weight:400;color:#222;letter-spacing:0.957px;">(X82000)</div>
<div class="t r" id="t38" style="left:957.00px;top:378.00px;font-size:14.5px;font-weight:400;color:#222;letter-spacing:0.717px;">bike</div>
<div class="t r" id="t39" style="left:1046.40px;top:377.00px;font-size:16px;font-weight:400;color:#222;letter-spacing:0.302px;">Expense</div>
<div class="t r" id="t40" style="left:1167.40px;top:379.00px;font-size:14px;font-weight:400;color:#fff;letter-spacing:0.991px;">Wants</div>
<div class="t r" id="t41" style="left:1229.00px;top:379.00px;font-size:14px;font-weight:400;color:#222;letter-spacing:0.496px;">Hobbies &amp; Recreation</div>
<div class="t r" id="t42" style="left:1388.80px;top:379.00px;font-size:14px;font-weight:400;color:#222;letter-spacing:0.430px;">Sports</div>
<div class="t r" id="t43" style="left:1735.90px;top:383.01px;font-size:16px;font-weight:400;color:#fff;letter-spacing:1.031px;">Modify</div>
<div class="t r" id="t44" style="left:154.90px;top:460.00px;font-size:16px;font-weight:400;color:#222;letter-spacing:0.771px;">25-04-2021</div>
<div class="t r" id="t45" style="left:278.60px;top:460.00px;font-size:15.5px;font-weight:400;color:#222;letter-spacing:0.152px;">PAYPAL *99BIKES 0735062777</div>
<div class="t r" id="t46" style="left:659.70px;top:460.00px;font-size:16px;font-weight:400;color:#5db4e6;letter-spacing:0.588px;">$37.99</div>
<div class="t r" id="t47" style="left:756.25px;top:460.00px;font-size:16px;font-weight:400;color:#222;letter-spacing:0.613px;">American Express</div>
<div class="t r" id="t48" style="left:756.25px;top:482.00px;font-size:16px;font-weight:400;color:#222;letter-spacing:0.957px;">(X82000)</div>
<div class="t r" id="t49" style="left:957.00px;top:460.00px;font-size:14.5px;font-weight:400;color:#222;letter-spacing:0.717px;">bike</div>
<div class="t r" id="t50" style="left:1046.40px;top:460.00px;font-size:16px;font-weight:400;color:#222;letter-spacing:0.302px;">Expense</div>
<div class="t r" id="t51" style="left:1167.40px;top:462.00px;font-size:14px;font-weight:400;color:#fff;letter-spacing:0.991px;">Wants</div>
<div class="t r" id="t52" style="left:1229.00px;top:462.00px;font-size:14px;font-weight:400;color:#222;letter-spacing:0.496px;">Hobbies &amp; Recreation</div>
<div class="t r" id="t53" style="left:1388.80px;top:462.00px;font-size:14px;font-weight:400;color:#222;letter-spacing:0.430px;">Sports</div>
<div class="t r" id="t54" style="left:1735.90px;top:466.01px;font-size:16px;font-weight:400;color:#fff;letter-spacing:1.031px;">Modify</div>
<div class="t r" id="t55" style="left:154.90px;top:542.00px;font-size:16px;font-weight:400;color:#222;letter-spacing:0.771px;">25-04-2021</div>
<div class="t r" id="t56" style="left:278.60px;top:542.00px;font-size:15.5px;font-weight:400;color:#222;letter-spacing:0.000px;transform:scaleX(0.9635);transform-origin:0 0;">AMAZON MKTPLC AU SYDNEY SOUTH</div>
<div class="t r" id="t57" style="left:668.00px;top:542.00px;font-size:16px;font-weight:400;color:#5db4e6;letter-spacing:0.000px;transform:scaleX(0.9103);transform-origin:0 0;">$11.99</div>
<div class="t r" id="t58" style="left:756.25px;top:542.00px;font-size:16px;font-weight:400;color:#222;letter-spacing:0.613px;">American Express</div>
<div class="t r" id="t59" style="left:756.25px;top:565.00px;font-size:16px;font-weight:400;color:#222;letter-spacing:0.957px;">(X82000)</div>
<div class="t r" id="t60" style="left:1046.40px;top:542.00px;font-size:16px;font-weight:400;color:#222;letter-spacing:0.302px;">Expense</div>
<div class="t r" id="t61" style="left:1167.40px;top:544.00px;font-size:14px;font-weight:400;color:#fff;letter-spacing:0.991px;">Wants</div>
<div class="t r" id="t62" style="left:1229.00px;top:544.00px;font-size:14px;font-weight:400;color:#222;letter-spacing:0.496px;">Hobbies &amp; Recreation</div>
<div class="t r" id="t63" style="left:1388.80px;top:544.00px;font-size:14px;font-weight:400;color:#222;letter-spacing:0.430px;">Sports</div>
<div class="t r" id="t64" style="left:1735.90px;top:548.01px;font-size:16px;font-weight:400;color:#fff;letter-spacing:1.031px;">Modify</div>
<div class="t r" id="t65" style="left:154.90px;top:625.00px;font-size:16px;font-weight:400;color:#222;letter-spacing:0.282px;">21-04-2021</div>
<div class="t r" id="t66" style="left:278.60px;top:625.00px;font-size:15.5px;font-weight:400;color:#222;letter-spacing:0.063px;">PAYPAL *PROBIKEKIT 07747568294</div>
<div class="t r" id="t67" style="left:648.75px;top:625.00px;font-size:16px;font-weight:400;color:#5db4e6;letter-spacing:0.831px;">$542.99</div>
<div class="t r" id="t68" style="left:756.25px;top:625.00px;font-size:16px;font-weight:400;color:#222;letter-spacing:0.613px;">American Express</div>
<div class="t r" id="t69" style="left:756.25px;top:647.00px;font-size:16px;font-weight:400;color:#222;letter-spacing:0.957px;">(X82000)</div>
<div class="t r" id="t70" style="left:1046.40px;top:625.00px;font-size:16px;font-weight:400;color:#222;letter-spacing:0.302px;">Expense</div>
<div class="t r" id="t71" style="left:1167.40px;top:627.00px;font-size:14px;font-weight:400;color:#fff;letter-spacing:0.991px;">Wants</div>
<div class="t r" id="t72" style="left:1229.00px;top:627.00px;font-size:14px;font-weight:400;color:#222;letter-spacing:0.496px;">Hobbies &amp; Recreation</div>
<div class="t r" id="t73" style="left:1388.80px;top:627.00px;font-size:14px;font-weight:400;color:#222;letter-spacing:0.430px;">Sports</div>
<div class="t r" id="t74" style="left:1735.90px;top:631.01px;font-size:16px;font-weight:400;color:#fff;letter-spacing:1.031px;">Modify</div>
<div class="t r" id="t75" style="left:154.90px;top:707.00px;font-size:16px;font-weight:400;color:#222;letter-spacing:0.326px;">19-04-2021</div>
<div class="t r" id="t76" style="left:278.60px;top:707.00px;font-size:15.5px;font-weight:400;color:#222;letter-spacing:-0.103px;">PAYPAL *BIKEBUGPTYL 0291828800</div>
<div class="t r" id="t77" style="left:662.80px;top:707.00px;font-size:16px;font-weight:400;color:#5db4e6;letter-spacing:-0.031px;">$10.99</div>
<div class="t r" id="t78" style="left:756.25px;top:707.00px;font-size:16px;font-weight:400;color:#222;letter-spacing:0.613px;">American Express</div>
<div class="t r" id="t79" style="left:756.25px;top:730.00px;font-size:16px;font-weight:400;color:#222;letter-spacing:0.957px;">(X82000)</div>
<div class="t r" id="t80" style="left:1046.40px;top:707.00px;font-size:16px;font-weight:400;color:#222;letter-spacing:0.302px;">Expense</div>
<div class="t r" id="t81" style="left:1167.40px;top:709.00px;font-size:14px;font-weight:400;color:#fff;letter-spacing:0.991px;">Wants</div>
<div class="t r" id="t82" style="left:1229.00px;top:709.00px;font-size:14px;font-weight:400;color:#222;letter-spacing:0.496px;">Hobbies &amp; Recreation</div>
<div class="t r" id="t83" style="left:1388.80px;top:709.00px;font-size:14px;font-weight:400;color:#222;letter-spacing:0.430px;">Sports</div>
<div class="t r" id="t84" style="left:1735.90px;top:713.01px;font-size:16px;font-weight:400;color:#fff;letter-spacing:1.031px;">Modify</div>
</body></html>
